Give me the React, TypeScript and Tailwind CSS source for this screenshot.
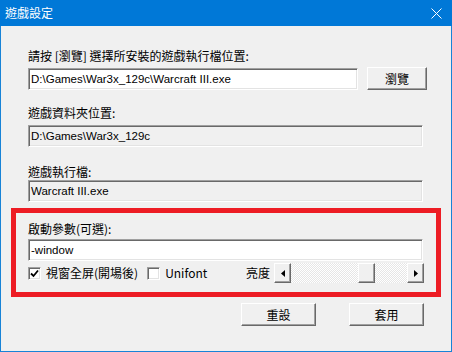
import React, { useState } from 'react';

const sunken =
  'border border-t-[#a0a0a0] border-l-[#a0a0a0] border-b-white border-r-white shadow-[inset_1px_1px_0_#696969,inset_-1px_-1px_0_#e3e3e3]';
const raised =
  'border border-t-white border-l-white border-b-[#696969] border-r-[#696969] shadow-[inset_-1px_-1px_0_#a0a0a0]';

const latin = "font-['Liberation_Sans','Noto_Sans_CJK_TC',sans-serif]";

const Field: React.FC<{ value: string; disabled?: boolean; className?: string }> = ({ value, disabled, className }) => (
  <div
    className={`h-[22px] ${sunken} ${disabled ? 'bg-[#f0f0f0]' : 'bg-white'} flex items-center pl-[2px] text-[11.5px] ${latin} text-black ${className ?? ''}`}
  >
    {value}
  </div>
);

const Button: React.FC<{ label: string; className?: string }> = ({ label, className }) => (
  <button className={`h-[23px] bg-[#f0f0f0] ${raised} text-[12px] text-black flex items-center justify-center ${className ?? ''}`}>
    {label}
  </button>
);

const Checkbox: React.FC<{ checked: boolean; label: string; onToggle: () => void }> = ({ checked, label, onToggle }) => (
  <label className="flex items-center gap-[5px] cursor-default" onClick={onToggle}>
    <span className={`w-[13px] h-[13px] bg-white ${sunken} flex items-center justify-center`}>
      {checked && (
        <svg width="9" height="9" viewBox="0 0 9 9">
          <path d="M1 4.5 L3.5 7 L8 1.5" stroke="#000" strokeWidth="1.8" fill="none" />
        </svg>
      )}
    </span>
    <span>{label}</span>
  </label>
);

const ArrowBox: React.FC<{ dir: 'left' | 'right' }> = ({ dir }) => (
  <div className={`w-[17px] h-full bg-[#f0f0f0] ${raised} flex items-center justify-center`}>
    <svg width="4" height="7" viewBox="0 0 4 7">
      {dir === 'left' ? <path d="M4 0 L0 3.5 L4 7 Z" fill="#000" /> : <path d="M0 0 L4 3.5 L0 7 Z" fill="#000" />}
    </svg>
  </div>
);

export default function App() {
  const [fullscreen, setFullscreen] = useState(true);
  const [unifont, setUnifont] = useState(false);

  return (
    <div className="w-[452px] h-[352px] flex flex-col border border-t-0 border-[#1883d7] font-['Noto_Sans_CJK_TC',sans-serif] text-[12px] leading-4 text-black">
      <div className="h-[26px] -mx-px bg-[#0078d7] flex items-center justify-between pl-[5px] pr-[10px] text-white">
        <span>遊戲設定</span>
        <svg width="11" height="11" viewBox="0 0 11 11">
          <path d="M0.5 0.5 L10.5 10.5 M10.5 0.5 L0.5 10.5" stroke="#fff" strokeWidth="1" />
        </svg>
      </div>

      <div className="flex-1 bg-[#f0f0f0] px-[10px] pt-[22px] flex flex-col">
        <div className="pl-[17px] flex flex-col">
          <span>請按 [瀏覽] 選擇所安裝的遊戲執行檔位置:</span>
          <div className="mt-[3px] flex items-center gap-[9px]">
            <Field value="D:\Games\War3x_129c\Warcraft III.exe" className="w-[330px]" />
            <Button label="瀏覽" className="w-[60px] h-[22px]" />
          </div>

          <span className="mt-[15px]">遊戲資料夾位置:</span>
          <Field value="D:\Games\War3x_129c" disabled className="mt-[4px] w-[395px]" />

          <span className="mt-[17px]">遊戲執行檔:</span>
          <Field value="Warcraft III.exe" disabled className="w-[395px]" />
        </div>

        <div className="mt-[6px] border-[5px] border-[#ed1c24] pl-[12px] pt-[8px] pb-[9px] flex flex-col">
          <span>啟動參數(可選):</span>
          <Field value="-window" className="mt-[2px] w-[395px]" />
          <div className="mt-[2px] h-[20px] w-[396px] flex items-center">
            <Checkbox checked={fullscreen} label="視窗全屏(開場後)" onToggle={() => setFullscreen(v => !v)} />
            <div className="ml-[9px]">
              <Checkbox checked={unifont} label="Unifont" onToggle={() => setUnifont(v => !v)} />
            </div>
            <span className="ml-auto mr-[4px]">亮度</span>
            <div className="w-[150px] h-[20px] flex bg-[image:repeating-conic-gradient(#ffffff_0_25%,#e6e6e6_0_50%)] bg-[length:2px_2px]">
              <ArrowBox dir="left" />
              <div className="flex-1 pl-[67px]">
                <div className={`w-[17px] h-full bg-[#f0f0f0] ${raised}`} />
              </div>
              <ArrowBox dir="right" />
            </div>
          </div>
        </div>

        <div className="mt-[6px] pr-[17px] flex justify-end gap-[33px]">
          <Button label="重設" className="w-[75px]" />
          <Button label="套用" className="w-[75px]" />
        </div>
      </div>
    </div>
  );
}
